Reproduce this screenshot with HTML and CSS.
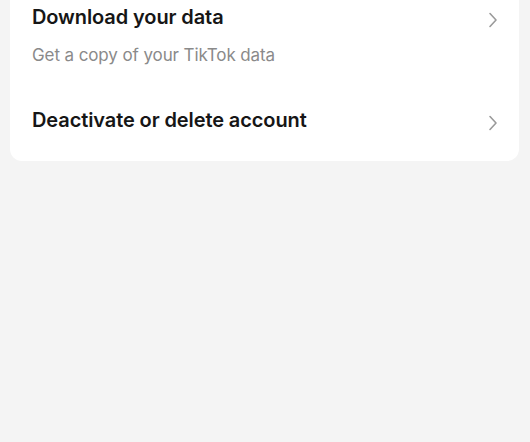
FILE: index.html
```html
<!DOCTYPE html>
<html>
<head>
<meta charset="utf-8">
<link rel="stylesheet" href="styles.css">
</head>
<body>
<div class="card">
  <div class="row row-first">
    <div class="texts">
      <div class="title">Download your data</div>
      <div class="sub">Get a copy of your TikTok data</div>
    </div>
    <svg class="chev" width="10" height="16" viewBox="0 0 10 16"><path d="M2 1.5 L8 8 L2 14.5" fill="none" stroke="#9a9a9a" stroke-width="1.6" stroke-linecap="round" stroke-linejoin="round"/></svg>
  </div>
  <div class="row row-second">
    <div class="texts">
      <div class="title">Deactivate or delete account</div>
    </div>
    <svg class="chev" width="10" height="16" viewBox="0 0 10 16"><path d="M2 1.5 L8 8 L2 14.5" fill="none" stroke="#9a9a9a" stroke-width="1.6" stroke-linecap="round" stroke-linejoin="round"/></svg>
  </div>
</div>
</body>
</html>
```
FILE: styles.css
```css
html, body {
  margin: 0;
  padding: 0;
  background: #f4f4f4;
  font-family: Inter, "Noto Sans", sans-serif;
}
body {
  width: 530px;
  height: 442px;
  overflow: hidden;
}
.card {
  margin: -20px 11px 0 10px;
  background: #ffffff;
  border-radius: 12px;
  padding: 20px 0 0 0;
}
.row {
  display: flex;
  align-items: flex-start;
  justify-content: space-between;
  padding: 0 21px 0 22px;
}
.row-first {
  padding-top: 2px;
  height: 100px;
  box-sizing: border-box;
}
.row-second {
  padding-top: 5px;
  height: 61px;
  box-sizing: border-box;
}
.row-first .chev {
  margin-top: 10px;
}
.row-second .chev {
  margin-top: 10px;
}
.title {
  font-size: 20px;
  font-weight: 600;
  color: #161616;
  line-height: 30px;
  letter-spacing: -0.1px;
}
.sub {
  font-size: 17px;
  color: #8a8a8a;
  line-height: 24px;
  margin-top: 11px;
  letter-spacing: -0.1px;
}
.chev {
  flex: none;
}
```
